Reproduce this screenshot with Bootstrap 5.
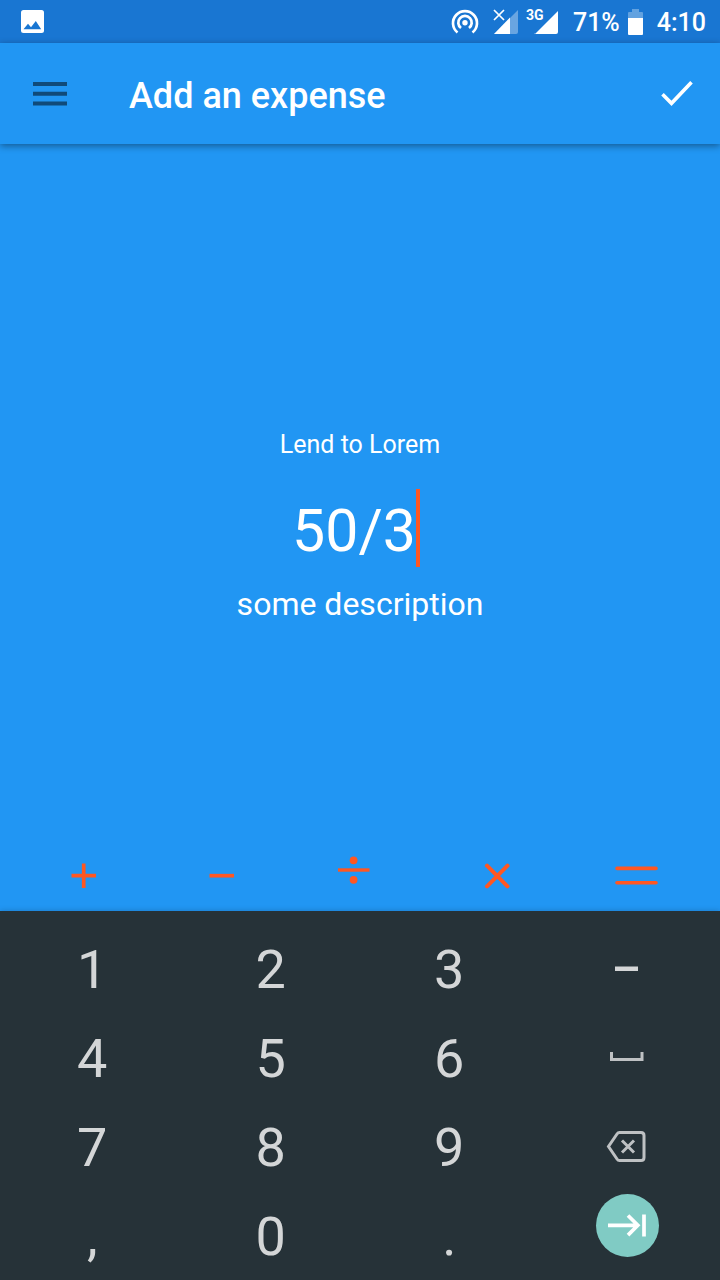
<!DOCTYPE html>
<html lang="en">
<head>
<meta charset="utf-8">
<meta name="viewport" content="width=device-width, initial-scale=1">
<title>Add an expense</title>
<link href="https://cdn.jsdelivr.net/npm/bootstrap@5.3.0/dist/css/bootstrap.min.css" rel="stylesheet">
<style>
  body { font-family: Roboto, "Noto Sans", sans-serif; background: #2196f3; color: #fff; }
  svg { display: block; flex: none; }
  .status-bar { background: #1976d2; height: 43px; font-size: 25px; line-height: 43px; font-weight: 500; padding: 0 14px 0 20px; gap: 14px; }
  .status-text { padding-top: 2px; }
  .app-bar { height: 101px; padding: 0 16px; background: #2196f3; box-shadow: 0 2px 7px rgba(0, 0, 0, .4); z-index: 1; }
  .app-title { font-size: 36px; line-height: 44px; font-weight: 500; padding-top: 4px; margin-left: 45px; }
  .icon-btn { background: none; border: 0; padding: 0; color: inherit; }
  .entry { padding-top: 68px; }
  .payee { font-size: 25px; line-height: 32px; margin-bottom: 28px; }
  .plain-input { background: none; border: 0; padding: 0; color: #fff; outline: 0; text-align: center; }
  .amount-row { padding-right: 8px; height: 78px; margin-bottom: 16px; }
  .amount { font-size: 59px; width: 124px; height: 78px; padding-top: 6px; }
  .caret { width: 4px; height: 78px; background: #ff5722; }
  .note { font-size: 32px; line-height: 40px; height: 40px; padding-top: 2px; }
  .operators { height: 71px; padding: 0 60px; color: #ff5722; }
  .keypad { background: #263238; padding: 13px 3px 0; box-shadow: 0 -1px 5px rgba(0, 0, 0, .15); z-index: 1; }
  .key { height: 89px; font-size: 54px; line-height: 86px; padding-top: 3px; color: #d4d6d7; }
  .key-icon { color: #bec1c3; padding-top: 0; }
  .key-next { width: 63px; height: 63px; background: #80cbc4; color: #fff; margin-bottom: 20px; }
</style>
</head>
<body class="d-flex flex-column min-vh-100">
  <div class="status-bar d-flex align-items-center">
    <svg width="25" height="25" viewBox="0 0 25 25" class="me-auto" aria-hidden="true"><rect x="1" y="1" width="23" height="23" rx="2.5" fill="#fff"/><path d="M3.500 20.300 8 14.800l3 3.400 4.800-6.300 5.400 8.400z" fill="#1976d2"/></svg>
    <svg width="28" height="26" viewBox="0 0 28 26" fill="none" stroke="#fff" stroke-width="2.700" aria-hidden="true"><path d="M6.500 23.500a12 12 0 1 1 15 0"/><path d="M10 19a6.700 6.700 0 1 1 8 0"/><circle cx="14" cy="13.700" r="2.700" fill="#fff" stroke="none"/></svg>
    <div class="d-flex gap-2">
      <svg width="25" height="26" viewBox="0 0 25 26" aria-hidden="true"><path d="M1 25 25 1v22q0 2-2 2z" fill="#fff" opacity=".35"/><path d="M1 25 17 8.500V25z" fill="#fff"/><path d="m1 1 10 10M11 1 1 11" stroke="#1976d2" stroke-width="4"/><path d="m1 1 10 10M11 1 1 11" stroke="#fff" stroke-width="1.700"/></svg>
      <svg width="33" height="26" viewBox="0 0 33 26" aria-hidden="true"><text x="0" y="11" font-size="14" font-weight="700" fill="#fff">3G</text><path d="M9 25 32 2v21q0 2-2 2H9q-1 0 0-1z" fill="#fff"/></svg>
    </div>
    <div class="d-flex align-items-center gap-2">
      <span class="status-text">71%</span>
      <svg width="15" height="26" viewBox="0 0 15 26" aria-hidden="true"><path d="M4 0h7v3h3q1 0 1 1v5H0V4q0-1 1-1h3z" fill="#fff" opacity=".32"/><path d="M0 9h15v16q0 1-1 1H1q-1 0-1-1z" fill="#fff"/></svg>
    </div>
    <span class="status-text">4:10</span>
  </div>

  <header class="app-bar d-flex align-items-center position-relative">
    <button type="button" class="icon-btn" aria-label="Menu"><svg width="68" height="48" viewBox="0 0 68 48" fill="none" stroke="#104a79" stroke-width="4"><path d="M17 14h34M17 23.700h34M17 33.500h34"/></svg></button>
    <h1 class="app-title mb-0 me-auto">Add an expense</h1>
    <button type="button" class="icon-btn" aria-label="Save"><svg width="48" height="48" viewBox="0 0 48 48" fill="none" stroke="#fff" stroke-width="3.600"><path d="m6.500 24.300 9 9 20-21"/></svg></button>
  </header>

  <main class="entry flex-grow-1 d-flex flex-column">
    <form class="my-auto text-center">
      <div class="payee">Lend to Lorem</div>
      <div class="amount-row d-flex justify-content-center">
        <input class="plain-input amount" type="text" value="50/3" aria-label="Amount"><span class="caret"></span>
      </div>
      <input class="plain-input note w-100" type="text" value="some description" aria-label="Description">
    </form>
    <div class="operators d-flex justify-content-between align-items-center">
      <button type="button" class="icon-btn" aria-label="Plus"><svg width="48" height="48" viewBox="0 0 48 48" stroke="currentColor" stroke-width="3.700"><path d="M11.500 23.700h24.500M23.700 11.500v24.500"/></svg></button>
      <button type="button" class="icon-btn" aria-label="Minus"><svg width="48" height="48" viewBox="0 0 48 48" stroke="currentColor" stroke-width="3.700"><path d="M11.500 23.700H36"/></svg></button>
      <button type="button" class="icon-btn" aria-label="Divide"><svg width="48" height="48" viewBox="0 0 48 48" fill="currentColor"><path d="M2 16.300h31.500v3.400H2z"/><circle cx="17.600" cy="8.300" r="3.900"/><circle cx="17.600" cy="27.800" r="3.900"/></svg></button>
      <button type="button" class="icon-btn" aria-label="Multiply"><svg width="48" height="48" viewBox="0 0 48 48" stroke="currentColor" stroke-width="4" stroke-linecap="round"><path d="m13 13.700 20.500 20.600M33.500 13.700 13 34.300"/></svg></button>
      <button type="button" class="icon-btn" aria-label="Equals"><svg width="48" height="48" viewBox="0 0 48 48" stroke="currentColor" stroke-width="3.600" stroke-linecap="round"><path d="M5 16.400h39M5 30.800h39"/></svg></button>
    </div>
  </main>

  <section class="keypad position-relative" aria-label="Keypad">
    <div class="row row-cols-4 g-0">
      <button type="button" class="icon-btn key">1</button>
      <button type="button" class="icon-btn key">2</button>
      <button type="button" class="icon-btn key">3</button>
      <button type="button" class="icon-btn key key-icon d-flex align-items-center justify-content-center" aria-label="Dash"><svg width="48" height="48" viewBox="0 0 48 48"><path d="M11 21.500h23V26H11z" fill="#d4d6d7"/></svg></button>
      <button type="button" class="icon-btn key">4</button>
      <button type="button" class="icon-btn key">5</button>
      <button type="button" class="icon-btn key">6</button>
      <button type="button" class="icon-btn key key-icon d-flex align-items-center justify-content-center" aria-label="Space"><svg width="48" height="48" viewBox="0 0 48 48" fill="none" stroke="currentColor" stroke-width="3"><path d="M7.500 18v7.500H38V18"/></svg></button>
      <button type="button" class="icon-btn key">7</button>
      <button type="button" class="icon-btn key">8</button>
      <button type="button" class="icon-btn key">9</button>
      <button type="button" class="icon-btn key key-icon d-flex align-items-center justify-content-center" aria-label="Backspace"><svg width="48" height="48" viewBox="0 0 48 48" fill="none" stroke="currentColor" stroke-width="3"><path d="M15.500 9.500H37q3 0 3 3v22q0 3-3 3H15.500q-1.500 0-2.500-1.500L4.500 23.500 13 11q1-1.500 2.500-1.500z"/><path d="m18 17.500 12 12M30 17.500l-12 12"/></svg></button>
      <button type="button" class="icon-btn key">,</button>
      <button type="button" class="icon-btn key">0</button>
      <button type="button" class="icon-btn key">.</button>
      <button type="button" class="icon-btn key key-icon d-flex align-items-center justify-content-center" aria-label="Next"><span class="key-next rounded-circle"><svg width="63" height="63" viewBox="0 0 63 63" fill="none" stroke="#fff" stroke-width="3.700"><path d="M12 31.300H42M32 21.500l9.800 9.800-9.800 9.800M48 20.500v22"/></svg></span></button>
    </div>
  </section>
<script src="https://cdn.jsdelivr.net/npm/bootstrap@5.3.0/dist/js/bootstrap.bundle.min.js"></script>
</body>
</html>
